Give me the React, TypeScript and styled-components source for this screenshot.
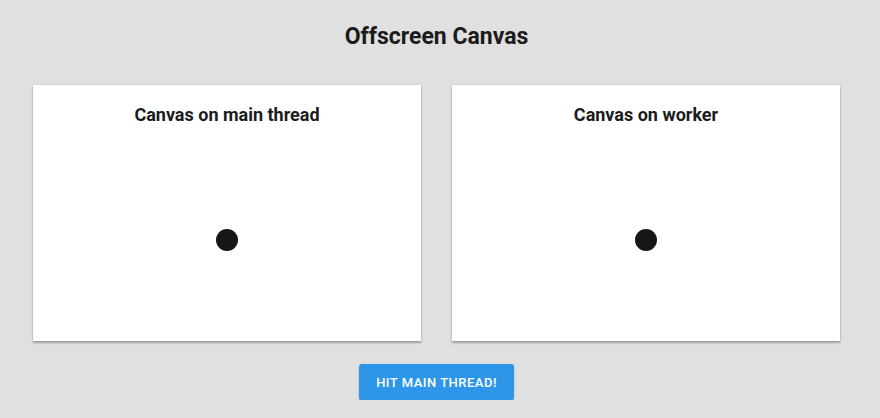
import React from "react";
import styled, { createGlobalStyle } from "styled-components";

const Global = createGlobalStyle`
  html, body { margin: 0; padding: 0; background: #e0e0e0; }
  body { font-family: Roboto, "Liberation Sans", sans-serif; color: #1b1b1b; }
`;

const Page = styled.div`
  width: 873px;
  display: flex;
  flex-direction: column;
  align-items: center;
  padding-top: 21px;
`;

const Title = styled.h1`
  margin: 0;
  font-size: 23px;
  font-weight: 700;
  line-height: 32px;
`;

const Row = styled.div`
  display: flex;
  gap: 31px;
  margin-top: 32px;
`;

const Card = styled.section`
  width: 388px;
  height: 256px;
  background: #fff;
  box-shadow: 0 2px 2px rgba(0, 0, 0, 0.28), 0 0 2px rgba(0, 0, 0, 0.14);
  display: flex;
  flex-direction: column;
  align-items: center;
`;

const CardTitle = styled.h2`
  margin: 0;
  padding-top: 18px;
  font-size: 18px;
  font-weight: 700;
  line-height: 24px;
`;

const Stage = styled.svg`
  display: block;
  width: 388px;
  height: 204px;
  margin-top: 10px;
`;

const Button = styled.button`
  margin-top: 23px;
  width: 155px;
  height: 36px;
  border: none;
  border-radius: 3px;
  background: #2d96e9;
  color: #fff;
  font-family: Roboto, "Liberation Sans", sans-serif;
  font-size: 13px;
  font-weight: 500;
  letter-spacing: 0.5px;
  text-transform: uppercase;
  box-shadow: 0 2px 2px rgba(0, 0, 0, 0.22), 0 0 1px rgba(0, 0, 0, 0.12);
  cursor: pointer;
`;

const Panel = ({ title }: { title: string }) => (
  <Card>
    <CardTitle>{title}</CardTitle>
    <Stage viewBox="0 0 388 204">
      <circle cx="194" cy="103" r="11" fill="#161616" />
    </Stage>
  </Card>
);

export default function App() {
  return (
    <>
      <Global />
      <Page>
        <Title>Offscreen Canvas</Title>
        <Row>
          <Panel title="Canvas on main thread" />
          <Panel title="Canvas on worker" />
        </Row>
        <Button>Hit main thread!</Button>
      </Page>
    </>
  );
}
